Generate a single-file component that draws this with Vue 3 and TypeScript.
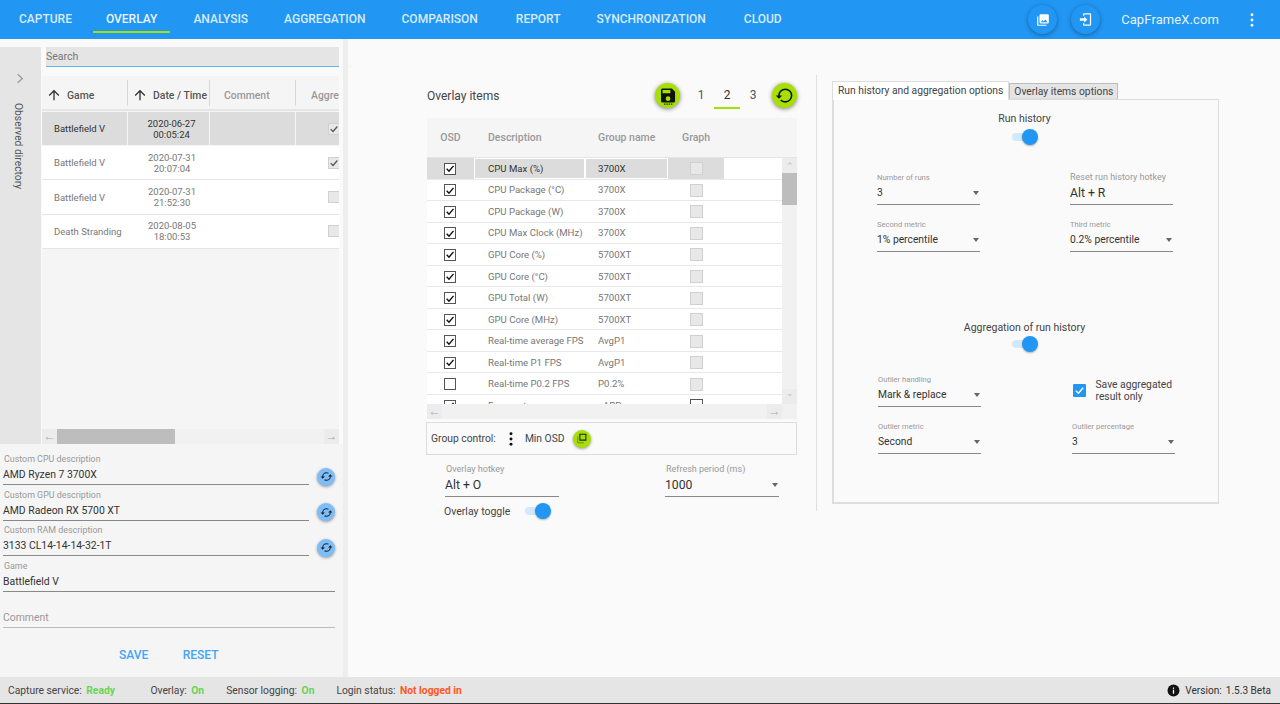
<script setup lang="ts">
const tabs = ['CAPTURE', 'OVERLAY', 'ANALYSIS', 'AGGREGATION', 'COMPARISON', 'REPORT', 'SYNCHRONIZATION', 'CLOUD']
const records = [
  { game: 'Battlefield V', date: '2020-06-27', time: '00:05:24', agg: true, selected: true },
  { game: 'Battlefield V', date: '2020-07-31', time: '20:07:04', agg: true, selected: false },
  { game: 'Battlefield V', date: '2020-07-31', time: '21:52:30', agg: false, selected: false },
  { game: 'Death Stranding', date: '2020-08-05', time: '18:00:53', agg: false, selected: false },
]
const items = [
  { d: 'CPU Max (%)', g: '3700X', on: true },
  { d: 'CPU Package (°C)', g: '3700X', on: true },
  { d: 'CPU Package (W)', g: '3700X', on: true },
  { d: 'CPU Max Clock (MHz)', g: '3700X', on: true },
  { d: 'GPU Core (%)', g: '5700XT', on: true },
  { d: 'GPU Core (°C)', g: '5700XT', on: true },
  { d: 'GPU Total (W)', g: '5700XT', on: true },
  { d: 'GPU Core (MHz)', g: '5700XT', on: true },
  { d: 'Real-time average FPS', g: 'AvgP1', on: true },
  { d: 'Real-time P1 FPS', g: 'AvgP1', on: true },
  { d: 'Real-time P0.2 FPS', g: 'P0.2%', on: false },
  { d: 'Framerate', g: '<APP>', on: true },
]
const customs = [
  { l: 'Custom CPU description', v: 'AMD Ryzen 7 3700X' },
  { l: 'Custom GPU description', v: 'AMD Radeon RX 5700 XT' },
  { l: 'Custom RAM description', v: '3133 CL14-14-14-32-1T' },
]
const sync = 'M12,18A6,6 0 0,1 6,12C6,11 6.25,10.03 6.7,9.2L5.24,7.74C4.46,8.97 4,10.43 4,12A8,8 0 0,0 12,20V23L16,19L12,15M12,4V1L8,5L12,9V6A6,6 0 0,1 18,12C18,13 17.75,13.97 17.3,14.8L18.76,16.26C19.54,15.03 20,13.57 20,12A8,8 0 0,0 12,4Z'
const arrowUp = 'M13,20H11V8L5.5,13.5L4.08,12.08L12,4.16L19.92,12.08L18.5,13.5L13,8V20Z'
</script>

<template>
  <div class="app">
    <header class="topbar">
      <nav class="nav">
        <span v-for="t in tabs" :key="t" class="nav-item" :class="{ active: t === 'OVERLAY' }">{{ t }}</span>
      </nav>
      <div class="top-right">
        <span class="round-top">
          <svg viewBox="0 0 24 24" width="14" height="14"><path fill="#fff" d="M22,16V4A2,2 0 0,0 20,2H8A2,2 0 0,0 6,4V16A2,2 0 0,0 8,18H20A2,2 0 0,0 22,16M11,12L13.03,14.71L16,11L20,16H8M2,6V20A2,2 0 0,0 4,22H18V20H4V6"/></svg>
        </span>
        <span class="round-top second">
          <svg viewBox="0 0 24 24" width="15" height="15"><path fill="#fff" d="M10,17V14H3V10H10V7L15,12L10,17M10,2H19A2,2 0 0,1 21,4V20A2,2 0 0,1 19,22H10A2,2 0 0,1 8,20V18H10V20H19V4H10V6H8V4A2,2 0 0,1 10,2Z"/></svg>
        </span>
        <span class="site">CapFrameX.com</span>
        <svg class="kebab-top" viewBox="0 0 4 16" width="4" height="14"><circle cx="2" cy="2" r="1.6" fill="#fff"/><circle cx="2" cy="8" r="1.6" fill="#fff"/><circle cx="2" cy="14" r="1.6" fill="#fff"/></svg>
      </div>
    </header>

    <div class="body">
      <aside class="left">
        <div class="left-top">
          <div class="rail">
            <svg class="rail-chev" viewBox="0 0 10 14" width="8" height="11"><path d="M2 1.5 L8 7 L2 12.5" fill="none" stroke="#9a9a9a" stroke-width="1.6"/></svg>
            <span class="rail-text">Observed directory</span>
          </div>
          <div class="browser">
            <div class="search">Search</div>
            <div class="rec-table">
              <div class="rec-scroll">
                <div class="rec-head">
                  <div class="rh c-game"><svg viewBox="0 0 24 24" width="16" height="16"><path fill="#333" :d="arrowUp"/></svg><span>Game</span></div>
                  <div class="rh c-date"><svg viewBox="0 0 24 24" width="16" height="16"><path fill="#333" :d="arrowUp"/></svg><span>Date / Time</span></div>
                  <div class="rh c-comment"><span class="muted">Comment</span></div>
                  <div class="rh c-agg"><span class="muted">Aggre</span></div>
                </div>
                <div v-for="(r, i) in records" :key="i" class="rec-row" :class="{ sel: r.selected }">
                  <div class="rc c-game">{{ r.game }}</div>
                  <div class="rc c-date dt"><span>{{ r.date }}</span><span>{{ r.time }}</span></div>
                  <div class="rc c-comment"></div>
                  <div class="rc c-agg">
                    <span class="grey-box">
                      <svg v-if="r.agg" viewBox="0 0 12 12" width="10" height="10"><path d="M2 6.2 L4.8 9 L10 3" fill="none" stroke="#555" stroke-width="1.5"/></svg>
                    </span>
                  </div>
                </div>
              </div>
              <div class="hbar">
                <span class="arrow">←</span>
                <span class="thumb"></span>
                <span class="arrow end">→</span>
              </div>
            </div>
          </div>
        </div>

        <div class="left-form">
          <div v-for="c in customs" :key="c.l" class="custom-row">
            <div class="lf-field short">
              <label>{{ c.l }}</label>
              <div class="lf-value">{{ c.v }}</div>
            </div>
            <span class="sync-btn">
              <svg viewBox="0 0 24 24" width="13" height="13"><path fill="#222" :d="sync" transform="rotate(90 12 12)"/></svg>
            </span>
          </div>
          <div class="lf-field game">
            <label>Game</label>
            <div class="lf-value">Battlefield V</div>
          </div>
          <div class="lf-field comment">
            <div class="lf-value placeholder">Comment</div>
          </div>
          <div class="actions">
            <span>SAVE</span>
            <span>RESET</span>
          </div>
        </div>
      </aside>

      <div class="splitter"></div>

      <main class="main">
        <section class="center">
          <div class="items-head">
            <span class="items-title">Overlay items</span>
            <div class="items-tools">
              <span class="lime-btn">
                <svg viewBox="0 0 20 20" width="20" height="20">
                  <path fill="#111" transform="translate(0.67 0.2) scale(0.78)" d="M15,9H5V5H15M12,19A3,3 0 0,1 9,16A3,3 0 0,1 12,13A3,3 0 0,1 15,16A3,3 0 0,1 12,19M17,3H5C3.89,3 3,3.9 3,5V19A2,2 0 0,0 5,21H19A2,2 0 0,0 21,19V7L17,3Z"/>
                  <path fill="#222" d="M6 17.4h1.4v1.4H6zM8.3 17.4h1.4v1.4H8.3zM10.6 17.4h1.4v1.4h-1.4zM12.9 17.4h1.4v1.4h-1.4z"/>
                </svg>
              </span>
              <div class="pages">
                <span class="page">1</span>
                <span class="page on">2</span>
                <span class="page">3</span>
              </div>
              <span class="lime-btn">
                <svg viewBox="0 0 24 24" width="19" height="19"><path fill="#111" d="M13,3A9,9 0 0,0 4,12H1L4.96,16.03L9,12H6A7,7 0 0,1 13,5A7,7 0 0,1 20,12A7,7 0 0,1 13,19C11.07,19 9.32,18.21 8.06,16.94L6.64,18.36C8.27,20 10.5,21 13,21A9,9 0 0,0 22,12A9,9 0 0,0 13,3"/></svg>
              </span>
            </div>
          </div>

          <div class="grid-box">
            <div class="grid-head">
              <span class="g-osd">OSD</span>
              <span class="g-desc">Description</span>
              <span class="g-group">Group name</span>
              <span class="g-graph">Graph</span>
            </div>
            <div class="grid-mid">
              <div class="grid-rows">
                <div v-for="(it, i) in items" :key="it.d" class="g-row" :class="{ sel: i === 0, last: i === items.length - 1 }">
                  <span class="g-osd cell-c">
                    <span class="check-box">
                      <svg v-if="it.on" viewBox="0 0 12 12" width="11" height="11"><path d="M2 6.3 L4.8 9.2 L10.2 2.8" fill="none" stroke="#111" stroke-width="1.7"/></svg>
                    </span>
                  </span>
                  <span class="g-desc cell-t">{{ it.d }}</span>
                  <span class="g-group cell-t">{{ it.g }}</span>
                  <span class="g-graph cell-c"><span class="grey-box small"></span></span>
                  <span class="g-fill"></span>
                </div>
              </div>
              <div class="vbar">
                <span class="v-btn">⌃</span>
                <span class="v-thumb"></span>
                <span class="v-space"></span>
                <span class="v-btn dn">⌄</span>
              </div>
            </div>
            <div class="hbar grid-h">
              <span class="arrow">←</span>
              <span class="h-space"></span>
              <span class="arrow end">→</span>
              <span class="corner"></span>
            </div>
          </div>

          <div class="group-control">
            <span>Group control:</span>
            <svg class="gc-kebab" viewBox="0 0 4 16" width="4" height="14"><circle cx="2" cy="2" r="1.7" fill="#111"/><circle cx="2" cy="8" r="1.7" fill="#111"/><circle cx="2" cy="14" r="1.7" fill="#111"/></svg>
            <span class="gc-min">Min OSD</span>
            <span class="lime-small">
              <svg viewBox="0 0 24 24" width="13" height="13"><path fill="none" stroke="#222" stroke-width="2" d="M9 4h11v11H9z"/><path fill="none" stroke="#555" stroke-width="1.2" d="M5 8v12h11"/></svg>
            </span>
          </div>

          <div class="hotkey-row">
            <div class="field hot">
              <label>Overlay hotkey</label>
              <div class="value big">Alt + O</div>
            </div>
            <div class="field refresh">
              <label>Refresh period (ms)</label>
              <div class="value big">1000<i class="caret"></i></div>
            </div>
          </div>
          <div class="toggle-row">
            <span>Overlay toggle</span>
            <span class="toggle"><i></i></span>
          </div>
        </section>

        <div class="vdiv"></div>

        <section class="options">
          <div class="tabstrip">
            <span class="tab on">Run history and aggregation options</span>
            <span class="tab">Overlay items options</span>
          </div>
          <div class="tabpanel">
            <div class="opt-title">Run history</div>
            <div class="tog-c"><span class="toggle"><i></i></span></div>
            <div class="opt-grid first">
              <div class="field tiny">
                <label>Number of runs</label>
                <div class="value">3<i class="caret"></i></div>
              </div>
              <div class="field">
                <label>Reset run history hotkey</label>
                <div class="value big">Alt + R</div>
              </div>
              <div class="field tiny">
                <label>Second metric</label>
                <div class="value">1% percentile<i class="caret"></i></div>
              </div>
              <div class="field tiny">
                <label>Third metric</label>
                <div class="value">0.2% percentile<i class="caret"></i></div>
              </div>
            </div>
            <div class="opt-title second">Aggregation of run history</div>
            <div class="tog-c low"><span class="toggle"><i></i></span></div>
            <div class="opt-grid two">
              <div class="field tiny">
                <label>Outlier handling</label>
                <div class="value">Mark &amp; replace<i class="caret"></i></div>
              </div>
              <div class="save-check">
                <span class="blue-box"><svg viewBox="0 0 12 12" width="11" height="11"><path d="M2 6.2 L4.8 9 L10 3" fill="none" stroke="#fff" stroke-width="1.5"/></svg></span>
                <span>Save aggregated<br />result only</span>
              </div>
              <div class="field tiny">
                <label>Outlier metric</label>
                <div class="value">Second<i class="caret"></i></div>
              </div>
              <div class="field tiny">
                <label>Outlier percentage</label>
                <div class="value">3<i class="caret"></i></div>
              </div>
            </div>
          </div>
        </section>
      </main>
    </div>

    <footer class="status">
      <span class="st s1">Capture service:<b class="green">Ready</b></span>
      <span class="st s2">Overlay:<b class="green">On</b></span>
      <span class="st s3">Sensor logging:<b class="green">On</b></span>
      <span class="st s4">Login status:<b class="red">Not logged in</b></span>
      <span class="st version">
        <svg viewBox="0 0 24 24" width="13" height="13"><circle cx="12" cy="12" r="11" fill="#111"/><rect x="10.8" y="10.5" width="2.4" height="7.5" fill="#fff"/><rect x="10.8" y="6.5" width="2.4" height="2.4" fill="#fff"/></svg>
        <span>Version:</span><span class="ver-num">1.5.3 Beta</span>
      </span>
    </footer>
  </div>
</template>

<style>
html, body { margin: 0; background: #fafafa; }
</style>

<style scoped>
* { box-sizing: border-box; }
.app {
  width: 1280px; height: 704px; overflow: hidden; display: flex; flex-direction: column;
  font-family: Roboto, "Noto Sans", sans-serif; color: #333; background: #fafafa;
}
/* top bar */
.topbar { height: 39px; flex: none; background: #2196f3; display: flex; justify-content: space-between; color: #fff; }
.nav { display: flex; padding-left: 1px; }
.nav-item {
  padding: 0 18px; display: flex; align-items: center; justify-content: center;
  font-size: 12px; font-weight: 500; color: #d6ebfc; line-height: 38px; height: 38px;
}
.nav-item:first-child { padding-right: 16px; }
.nav-item:nth-child(5), .nav-item:nth-child(7) { padding-right: 20px; }
.nav-item.active { color: #e9f5fe; position: relative; }
.nav-item.active::after {
  content: ""; position: absolute; left: 5px; right: 5px; top: 31px; height: 2px; background: #a6e000;
}
.top-right { display: flex; align-items: center; padding-right: 26px; }
.round-top {
  width: 29px; height: 29px; border-radius: 50%; background: #2196f3; display: flex; align-items: center; justify-content: center;
  box-shadow: 0 1px 4px rgba(0,0,0,.35);
}
.round-top.second { margin-left: 14px; }
.site { margin-left: 21px; font-size: 13px; color: #e6f3fe; letter-spacing: .1px; }
.kebab-top { margin-left: 31px; }

.body { flex: 1; display: flex; min-height: 0; }
.left { width: 343px; flex: none; background: #f5f5f5; display: flex; flex-direction: column; }
.splitter { width: 5px; flex: none; background: #eeeeee; }
.left-top { height: 405px; flex: none; display: flex; background: #fafafa; padding-top: 8px; }
.rail { width: 41px; flex: none; background: #e5e5e5; position: relative; }
.rail-chev { position: absolute; left: 16px; top: 26px; }
.rail-text {
  position: absolute; left: 12px; top: 56px; writing-mode: vertical-rl; font-size: 10.3px; color: #555;
}
.browser { width: 298px; padding-left: 1px; }
.search {
  margin-left: 4px; width: 293px; height: 20px; background: #e5e5e5; border-bottom: 1px solid #64b5f6;
  font-size: 10.5px; line-height: 20px; color: #777;
}
.rec-table { margin-top: 9px; background: #f5f5f5; height: 368px; display: flex; flex-direction: column; width: 297px; }
.rec-scroll { flex: 1; overflow: hidden; }
.rec-head { display: flex; height: 35px; padding-top: 4px; border-bottom: 2px solid #e5e5e5; }
.rh { display: flex; align-items: center; font-size: 10.4px; font-weight: 500; color: #555; height: 26px; padding-top: 4px; border-right: 1px solid #d8d8d8; }
.rh svg { margin: 0 5px 0 4px; flex: none; }
.rh.c-agg { border-right: 0; padding-left: 15px; overflow: hidden; }
.rh.c-comment { padding-left: 14px; }
.muted { color: #999; }
.c-game { width: 86px; flex: none; }
.c-date { width: 82px; flex: none; white-space: nowrap; }
.c-comment { width: 86px; flex: none; }
.c-agg { width: 43px; flex: none; }
.rec-row { display: flex; height: 34.4px; background: #fff; border-bottom: 1px solid #e5e5e5; font-size: 9.5px; color: #777; }
.rc { display: flex; align-items: center; }
.rec-row .c-game { padding-left: 12px; }
.rec-row.sel { background: #f5f5f5; height: 35px; border-bottom: 0; }
.rec-row.sel .rc { background: #dcdcdc; color: #333; margin: 1px 1px 1px 0; }
.rec-row.sel .c-game, .rec-row.sel .c-comment { width: 85px; }
.rec-row.sel .c-date { width: 81px; }
.rec-row.sel .c-agg { margin-right: 0; }
.dt { flex-direction: column; justify-content: center; line-height: 11px; padding-left: 6px; }
.rec-row .c-agg { padding-left: 32px; overflow: hidden; }
.grey-box {
  width: 12px; height: 12px; flex: none; background: #e8e8e8; border: 1px solid #d0d0d0; display: flex; align-items: center; justify-content: center;
}
.hbar { display: flex; align-items: center; height: 15px; flex: none; background: #f1f1f1; }
.arrow { width: 15px; height: 15px; font-size: 12px; line-height: 14px; text-align: center; color: #aaa; background: #ececec; flex: none; }
.arrow.end { margin-left: auto; }
.thumb { width: 118px; height: 15px; background: #bdbdbd; }

.left-form { flex: 1; padding: 10px 8px 0 3px; background: #f5f5f5; }
.custom-row { display: flex; align-items: flex-start; height: 35.5px; }
.lf-field label { display: block; font-size: 8.9px; color: #999; line-height: 11px; height: 11px; padding-left: 1px; white-space: nowrap; }
.lf-value { height: 20px; line-height: 19px; font-size: 10.4px; color: #333; border-bottom: 1px solid #888; white-space: nowrap; }
.lf-field.short { width: 306px; }
.sync-btn {
  width: 18px; height: 18px; margin: 13.5px 0 0 8px; border-radius: 50%; background: #7dbdf9; display: flex; align-items: center; justify-content: center;
  box-shadow: 0 1px 3px rgba(0,0,0,.4); flex: none;
}
.lf-field.game { width: 332px; }
.lf-field.comment { width: 332px; margin-top: 16px; }
.lf-value.placeholder { color: #999; border-bottom: 1px solid #bbb; }
.actions { display: flex; gap: 34.5px; margin: 20px 0 0 116px; font-size: 12px; font-weight: 500; color: #42a5f5; }

/* main */
.main { flex: 1; display: flex; background: #fafafa; padding-left: 78px; padding-top: 36px; align-items: flex-start; }
.center { width: 371px; flex: none; }
.items-head { height: 43px; display: flex; justify-content: space-between; padding: 0 0 0 1px; align-items: flex-start; }
.items-title { font-size: 12px; color: #444; margin-top: 14px; }
.items-tools { display: flex; align-items: flex-start; margin-top: 8px; }
.lime-btn {
  width: 25px; height: 25px; border-radius: 50%; background: #a6e000; display: flex; align-items: center; justify-content: center;
  box-shadow: 0 1px 4px rgba(0,0,0,.5); flex: none;
}
.pages { display: flex; margin: 0 6px 0 8px; width: 78px; }
.page { width: 26px; height: 26px; text-align: center; font-size: 12px; line-height: 24px; color: #555; flex: none; }
.page.on { color: #333; border-bottom: 2px solid #a6e000; height: 26px; }
.grid-box { width: 370px; margin-left: 1px; background: #f5f5f5; }
.grid-head { height: 40px; display: flex; align-items: center; font-size: 10.5px; font-weight: 500; color: #999; border-bottom: 1px solid #e5e5e5; }
.g-osd { width: 47px; flex: none; }
.g-desc { width: 111px; flex: none; padding-left: 14px; white-space: nowrap; }
.g-group { width: 83px; flex: none; padding-left: 13px; }
.g-graph { width: 56px; flex: none; }
.grid-head .g-osd { text-align: center; }
.grid-head .g-graph { padding-left: 14px; }
.grid-mid { display: flex; height: 246px; }
.grid-rows { width: 355px; flex: none; height: 246px; overflow: hidden; background: #fff; }
.g-row { display: flex; height: 21.55px; border-bottom: 1px solid #e8e8e8; align-items: stretch; font-size: 9.6px; color: #777; background: #fff; }
.g-row.sel { color: #333; }
.g-row.sel .g-osd, .g-row.sel .g-graph { background: #dcdcdc; }
.g-row.sel .g-desc, .g-row.sel .g-group { background: #dcdcdc; border: 1px solid #fff; }
.g-row.sel .g-desc { padding-left: 13px; }
.g-row.sel .g-group { padding-left: 12px; }
.g-fill { flex: 1; }
.cell-c { display: flex; align-items: center; justify-content: center; }
.cell-t { display: flex; align-items: center; }
.check-box { width: 12px; height: 12px; margin: 1px 1px 0 0; border: 1px solid #555; background: #fff; display: flex; align-items: center; justify-content: center; }
.grey-box.small { width: 13px; height: 13px; margin-top: 1px; }
.g-row.last .grey-box.small { background: #fff; border-color: #555; }
.vbar { width: 15px; flex: none; display: flex; flex-direction: column; background: #f1f1f1; }
.v-btn { height: 15px; font-size: 9px; line-height: 17px; text-align: center; color: #bbb; background: #ececec; }
.v-btn.dn { line-height: 9px; }
.v-thumb { height: 32px; background: #bdbdbd; }
.v-space { flex: 1; }
.h-space { flex: 1; }
.corner { width: 15px; flex: none; }
.group-control {
  margin-top: 3px; width: 371px; height: 33px; border: 1px solid #ddd; display: flex; align-items: center; padding-left: 4px; font-size: 10.3px; color: #444;
}
.gc-kebab { margin-left: 13px; }
.gc-min { margin-left: 12px; color: #37474f; }
.lime-small {
  width: 18px; height: 18px; border-radius: 50%; background: #a6e000; margin-left: 8px; display: flex; align-items: center; justify-content: center;
  box-shadow: 0 1px 3px rgba(0,0,0,.4);
}
.field label { display: block; font-size: 9px; color: #999; line-height: 11px; height: 12px; white-space: nowrap; }
.field.tiny label { font-size: 7.6px; }
.field .value {
  position: relative; height: 21px; line-height: 18.5px; font-size: 10.3px; color: #333; border-bottom: 1px solid #888; white-space: nowrap;
}
.field .value.big { font-size: 12.2px; }
.caret {
  position: absolute; right: 1px; top: 7px; width: 0; height: 0; border-left: 3.5px solid transparent; border-right: 3.5px solid transparent; border-top: 4px solid #666;
}
.hotkey-row { display: flex; margin-top: 9px; padding-left: 19px; }
.hotkey-row label { padding-left: 1px; }
.hotkey-row .hot { width: 114px; }
.hotkey-row .refresh { width: 114px; margin-left: 106px; }
.toggle-row { display: flex; align-items: center; margin-top: 4px; padding-left: 18px; font-size: 10.5px; color: #444; height: 20px; }
.toggle-row .toggle { margin-left: 15px; }
.toggle { position: relative; display: block; width: 26px; height: 16px; }
.toggle::before { content: ""; position: absolute; left: 0; right: 4px; top: 4px; height: 8px; border-radius: 4px; background: #d3e9fb; }
.toggle i { position: absolute; right: 0; top: 0; width: 16px; height: 16px; border-radius: 50%; background: #2196f3; box-shadow: 0 1px 2px rgba(0,0,0,.3); }
.vdiv { width: 1px; height: 436px; flex: none; background: #e0e0e0; margin: 0 15px 0 19px; }
.options { width: 387px; flex: none; padding-top: 5px; }
.tabstrip { display: flex; align-items: flex-end; height: 19px; font-size: 10.3px; color: #444; position: relative; z-index: 1; }
.tab { height: 16px; line-height: 16px; padding: 0 4px; background: #e5e5e5; border: 1px solid #bdbdbd; border-bottom: 1px solid #ddd; white-space: nowrap; }
.tab.on { padding: 0 5px; background: #fff; border-bottom: 0; border-color: #ddd; height: 19px; line-height: 17px; margin-bottom: -1px; }
.tabpanel { height: 404.5px; border: 1px solid #ddd; border-left-width: 2px; border-bottom-width: 2px; background: #fafafa; padding: 12px 45px 0 43px; }
.opt-title { font-size: 10.5px; text-align: center; color: #444; line-height: 13px; padding-right: 1px; }
.opt-title.second { margin-top: 69px; }
.tog-c { display: flex; justify-content: center; margin-top: 3.5px; }
.tog-c.low { margin-top: 2.5px; }
.opt-grid { display: grid; grid-template-columns: 103px 103px; justify-content: space-between; row-gap: 13.5px; }
.opt-grid.first { margin-top: 27.5px; }
.opt-grid.two { margin-top: 22px; padding: 0 0 0 1px; column-gap: 91px; justify-content: start; row-gap: 14.4px; }
.save-check { display: flex; align-items: center; gap: 10px; font-size: 10.3px; line-height: 12px; color: #444; padding-left: 1px; height: 33px; white-space: nowrap; }
.blue-box { width: 12.5px; height: 12.5px; border-radius: 1px; background: #2196f3; display: flex; align-items: center; justify-content: center; flex: none; }

/* status */
.status { height: 27px; flex: none; background: #e5e5e5; border-bottom: 1px solid #333; display: flex; align-items: center; padding-left: 8px; font-size: 10.3px; color: #444; white-space: nowrap; }
.status b { font-weight: 700; margin-left: 4.5px; }
.green { color: #66d555; }
.red { color: #ff5722; }
.s2 { margin-left: 35.5px; }
.s3 { margin-left: 22px; }
.s4 { margin-left: 22px; }
.version { margin-left: auto; margin-right: 9px; display: flex; align-items: center; gap: 4px; color: #333; font-size: 10.1px; }
.version svg { margin-right: 1px; }
</style>
